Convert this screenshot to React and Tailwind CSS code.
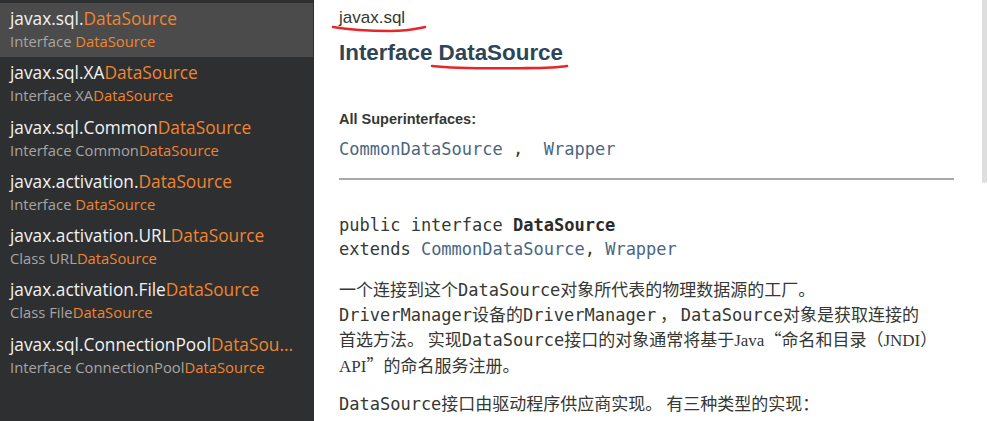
import React from "react";

const results = [
  { pre: "javax.sql.", sub: "Interface ", active: true },
  { pre: "javax.sql.XA", sub: "Interface XA" },
  { pre: "javax.sql.Common", sub: "Interface Common" },
  { pre: "javax.activation.", sub: "Interface " },
  { pre: "javax.activation.URL", sub: "Class URL" },
  { pre: "javax.activation.File", sub: "Class File" },
  { pre: "javax.sql.ConnectionPool", sub: "Interface ConnectionPool", cut: true },
];

const mono = { fontFamily: '"DejaVu Sans Mono", monospace' };
const serif = { fontFamily: '"Liberation Serif", serif' };

const Code = ({ children, link }) => (
  <span style={mono} className={link ? "text-[#4a6782]" : ""}>
    {children}
  </span>
);

const App = () => {
  return (
    <div className="flex w-[988px] h-[421px] overflow-hidden bg-white">
      {/* Search results */}
      <div
        className="w-[314px] shrink-0 bg-[#2e2f31] pt-[3px] pr-px"
        style={{ fontFamily: '"Open Sans", "Noto Sans", sans-serif' }}
      >
        {results.map((r, i) => (
          <div
            key={i}
            className={`h-[54.3px] pl-[10px] pt-[6px] ${r.active ? "bg-[#4b4b4b]" : ""}`}
          >
            <div className="text-[17.3px] leading-[20px] text-[#f2f2f2] whitespace-nowrap">
              {r.pre}
              <span className="text-[#ee8530]">{r.cut ? "DataSou..." : "DataSource"}</span>
            </div>
            <div className="mt-[2px] text-[14.8px] leading-[20px] text-[#a6a6a6] whitespace-nowrap">
              {r.sub}
              <span className="text-[#ee8530]">DataSource</span>
            </div>
          </div>
        ))}
      </div>

      {/* Doc content */}
      <div
        className="relative w-[640px] shrink-0 pl-[25px] text-[#353833]"
        style={{ fontFamily: '"Liberation Sans", Arial, sans-serif' }}
      >
        <div className="pt-[8px] text-[17px] leading-[20px] text-[#353833]">javax.sql</div>
        <h1 className="mt-[10px] text-[22.4px] leading-[30px] font-bold text-[#2c4557]">
          Interface DataSource
        </h1>
        <div className="mt-[42px] text-[14.5px] leading-[18px] font-bold">All Superinterfaces:</div>
        <div className="mt-[10px] text-[17px] leading-[22px] whitespace-pre">
          <Code link>CommonDataSource</Code>
          <Code> ,  </Code>
          <Code link>Wrapper</Code>
        </div>
        <div className="mt-[17px] h-[2px] bg-[#a9a9a9] w-[615px]" />

        <div className="mt-[33px] text-[17px] leading-[24px]" style={mono}>
          <div>
            public interface <b className="text-[#2b2b2b]">DataSource</b>
          </div>
          <div>
            extends <span className="text-[#4a6782]">CommonDataSource</span>,{" "}
            <span className="text-[#4a6782]">Wrapper</span>
          </div>
        </div>

        <div
          className="mt-[16px] text-[17px] leading-[24px] whitespace-nowrap"
          style={{ fontFamily: '"Noto Sans CJK SC", sans-serif' }}
        >
          <div>
            一个连接到这个<Code>DataSource</Code>对象所代表的物理数据源的工厂。
          </div>
          <div>
            <Code>DriverManager</Code>设备的<Code>DriverManager</Code> ， <Code>DataSource</Code>对象是获取连接的
          </div>
          <div>
            首选方法。 实现<Code>DataSource</Code>接口的对象通常将基于<span style={serif}>Java</span>“命名和目录（
            <span style={serif}>JNDI</span>）
          </div>
          <div>
            <span style={serif}>API</span>”的命名服务注册。
          </div>
          <div className="mt-[12px]">
            <Code>DataSource</Code>接口由驱动程序供应商实现。 有三种类型的实现：
          </div>
        </div>

        {/* red hand-drawn underlines */}
        <svg
          className="absolute left-0 top-0 pointer-events-none"
          width="640"
          height="90"
          viewBox="314 0 640 90"
        >
          <path
            d="M333 27 C 345 29, 370 31, 390 31 S 415 29, 425 27"
            fill="none"
            stroke="#e8262a"
            strokeWidth="2.6"
            strokeLinecap="round"
          />
          <path
            d="M432 66 C 450 68, 490 68.5, 520 68.2 S 555 68, 567 66"
            fill="none"
            stroke="#e8262a"
            strokeWidth="2.6"
            strokeLinecap="round"
          />
        </svg>
      </div>

      {/* scrollbar */}
      <div className="flex-1 flex justify-end pr-px">
        <div className="w-[5px] h-[183px] bg-[#dedede] rounded-b-sm" />
      </div>
    </div>
  );
};

export default App;
